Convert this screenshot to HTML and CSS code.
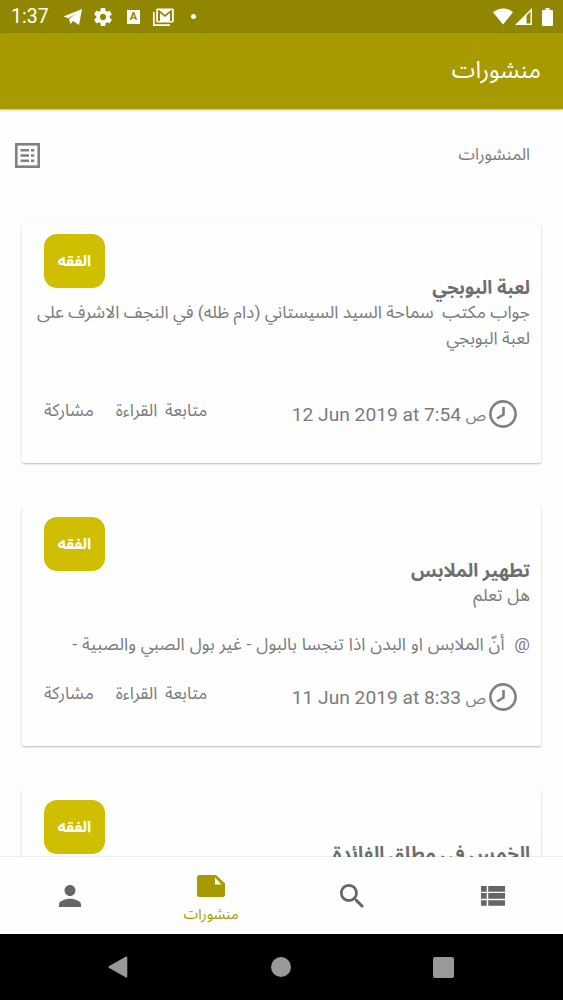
FILE: index.html
```html
<!DOCTYPE html>
<html lang="ar" dir="rtl">
  <head>
    <meta charset="utf-8">
    <title>منشورات</title>
    <link rel="stylesheet" href="styles.css">
  </head>
  <body>
    <div class="screen">
      <div class="status-bar" dir="ltr">
        <span class="time">1:37</span>
        <svg class="st-telegram" viewBox="0 0 20 18" width="20" height="18"><path d="M0.5 8.5 L19 1 L16 17 L10 13 L7.5 16 L6 10.800 L13.500 5.500 L5 10.3z"/></svg>
        <svg class="st-gear" viewBox="2 2 20 20" width="18" height="18"><path d="M19.43 12.98c.04-.32.07-.64.07-.98s-.03-.66-.07-.98l2.11-1.65c.19-.15.24-.42.12-.64l-2-3.46c-.12-.22-.39-.3-.61-.22l-2.49 1c-.52-.4-1.08-.73-1.69-.98l-.38-2.65C14.46 2.18 14.25 2 14 2h-4c-.25 0-.46.18-.49.42l-.38 2.65c-.61.25-1.17.59-1.69.98l-2.49-1c-.23-.09-.49 0-.61.22l-2 3.46c-.13.22-.07.49.12.64l2.11 1.65c-.04.32-.07.65-.07.98s.03.66.07.98l-2.11 1.65c-.19.15-.24.42-.12.64l2 3.46c.12.22.39.3.61.22l2.49-1c.52.4 1.08.73 1.69.98l.38 2.65c.03.24.24.42.49.42h4c.25 0 .46-.18.49-.42l.38-2.65c.61-.25 1.17-.59 1.69-.98l2.49 1c.23.09.49 0 .61-.22l2-3.46c.12-.22.07-.49-.12-.64l-2.11-1.65zM12 15.5c-1.93 0-3.5-1.57-3.5-3.5s1.57-3.5 3.5-3.5 3.5 1.57 3.5 3.5-1.57 3.5-3.5 3.5z"/></svg>
        <span class="st-letter">A</span>
        <svg class="st-mail" viewBox="0 0 21 18" width="21" height="18"><path d="M0 4h1.7v12.3H17V18H0z"/><path fill-rule="evenodd" d="M4.500 .5h15a1.300 1.300 0 0 1 1.300 1.300v11.400a1.300 1.300 0 0 1-1.300 1.300h-15a1.300 1.300 0 0 1-1.300-1.300v-11.400a1.300 1.300 0 0 1 1.300-1.300z M5 2v11h2V5l5 4 5-4v8h2V2h-1l-6 4.800L6 2z"/></svg>
        <span class="st-dot"></span>
        <svg class="st-wifi" viewBox="0 0 20 17" width="20" height="17"><path d="M0 4.200C6 -.9 14 -.9 20 4.200L10 16.500z"/></svg>
        <svg class="st-signal" viewBox="0 0 17 17" width="17" height="17"><path fill-rule="evenodd" d="M0 17L17 0v17z M11.500 7.500V15.500H15.500V3.500z"/></svg>
        <svg class="st-battery" viewBox="0 0 11 18" width="11" height="18"><path d="M3.500 0h4v2H10a1 1 0 0 1 1 1v14a1 1 0 0 1-1 1H1a1 1 0 0 1-1-1V3a1 1 0 0 1 1-1h2.500z"/></svg>
      </div>

      <header class="toolbar"><h1>منشورات</h1></header>

      <main class="content">
        <div class="section-head">
          <span class="section-title">المنشورات</span>
          <svg viewBox="0 0 25 25" width="25" height="25"><rect x="1.300" y="1.300" width="22.400" height="22.400" fill="none" stroke="#808080" stroke-width="2.600"/><path fill="#808080" d="M5.500 6h8.500v2.600H5.500z M16 6h3.200v2.600H16z M5.500 11.200h8.500v2.600H5.500z M16 11.200h3.200v2.600H16z M5.500 16.400h8.500V19H5.500z M16 16.400h3.200V19H16z"/></svg>
        </div>

        <article class="card">
          <span class="badge">الفقه</span>
          <h2>لعبة البوبجي</h2>
          <p class="excerpt first">جواب مكتب&nbsp; سماحة السيد السيستاني (دام ظله) في النجف الاشرف على<br>لعبة البوبجي</p>
          <div class="card-footer">
            <svg class="clock" viewBox="0 0 28 28" width="28" height="28"><circle cx="14" cy="14" r="12.600"/><path d="M14.500 7v7.500L8 18.500"/></svg>
            <span class="date" dir="ltr">12 Jun 2019 at 7:54 <span class="period">ص</span></span>
            <a class="more">متابعة القراءة</a>
            <a class="share">مشاركة</a>
          </div>
        </article>

        <article class="card">
          <span class="badge">الفقه</span>
          <h2>تطهير الملابس</h2>
          <p class="excerpt">هل تعلم<br><br>@&nbsp; أنّ الملابس او البدن اذا تنجسا بالبول - غير بول الصبي والصبية -</p>
          <div class="card-footer">
            <svg class="clock" viewBox="0 0 28 28" width="28" height="28"><circle cx="14" cy="14" r="12.600"/><path d="M14.500 7v7.500L8 18.500"/></svg>
            <span class="date" dir="ltr">11 Jun 2019 at 8:33 <span class="period">ص</span></span>
            <a class="more">متابعة القراءة</a>
            <a class="share">مشاركة</a>
          </div>
        </article>

        <article class="card">
          <span class="badge">الفقه</span>
          <h2>الخمس في مطلق الفائدة</h2>
        </article>
      </main>

      <nav class="tabs">
        <a class="tab"><svg viewBox="0 0 24 20" width="24" height="20"><path d="M0 0h5.700v5.700H0z M7.200 0H24v5.700H7.200z M0 7.100h5.700v5.700H0z M7.200 7.100H24v5.700H7.200z M0 14.200h5.700v5.600H0z M7.200 14.200H24v5.600H7.200z"/></svg></a>
        <a class="tab"><svg viewBox="3 3 17.500 17.500" width="24" height="24"><path d="M15.500 14h-.79l-.28-.27C15.410 12.590 16 11.110 16 9.500 16 5.910 13.090 3 9.500 3S3 5.910 3 9.500 5.910 16 9.500 16c1.610 0 3.090-.59 4.230-1.570l.27.28v.79l5 4.990L20.490 19l-4.990-5zm-6 0C7.010 14 5 11.990 5 9.500S7.010 5 9.500 5 14 7.010 14 9.500 11.990 14 9.500 14z"/></svg></a>
        <a class="tab active">
          <svg viewBox="0 0 28 22" width="28" height="22"><path fill-rule="evenodd" d="M2.500 0H19l9 8.500v11a2.500 2.500 0 0 1-2.500 2.500h-23A2.500 2.500 0 0 1 0 19.500v-17A2.500 2.500 0 0 1 2.500 0z M18 2.500v7h6.500z"/></svg>
          <span>منشورات</span>
        </a>
        <a class="tab"><svg viewBox="4 4 16 16" width="22" height="22"><path d="M12 12c2.210 0 4-1.790 4-4s-1.790-4-4-4-4 1.790-4 4 1.790 4 4 4zm0 2c-2.670 0-8 1.340-8 4v2h16v-2c0-2.660-5.330-4-8-4z"/></svg></a>
      </nav>

      <div class="system-bar" dir="ltr">
        <svg class="sys-back" viewBox="0 0 20 22" width="20" height="22"><path d="M18 .5a1 1 0 0 1 1.300 1v19a1 1 0 0 1-1.300 1L.8 11.800a1 1 0 0 1 0-1.600z"/></svg>
        <span class="sys-home"></span>
        <span class="sys-recent"></span>
      </div>
    </div>
  </body>
</html>
```

FILE: styles.css
```css
* {
  box-sizing: border-box;
}

body {
  margin: 0;
  font-family: Roboto, "Noto Sans Arabic", "Noto Sans", "DejaVu Sans", sans-serif;
  color: #7b7b7b;
}

svg {
  display: block;
  flex: none;
}

.screen {
  width: 563px;
  height: 1000px;
  display: flex;
  flex-direction: column;
  overflow: hidden;
  background: #fdfdfd;
}

.status-bar {
  height: 33px;
  flex: none;
  display: flex;
  align-items: center;
  padding: 0 10px 0 11px;
  background: #918600;
  color: #fff;
}

.status-bar svg {
  fill: #fff;
}

.time {
  width: 52px;
  font-size: 19.5px;
}

.st-gear {
  margin-left: 11px;
}

.st-letter {
  width: 13px;
  height: 14px;
  margin-left: 15px;
  background: #fff;
  color: #918600;
  font-size: 11px;
  font-weight: bold;
  line-height: 14px;
  text-align: center;
}

.st-mail {
  margin-left: 13px;
}

.st-dot {
  width: 5px;
  height: 5px;
  margin-left: 17px;
  border-radius: 50%;
  background: #fff;
}

.st-wifi {
  margin-left: auto;
}

.st-signal {
  margin-left: 2px;
}

.st-battery {
  margin-left: 10px;
}

.toolbar {
  height: 76px;
  flex: none;
  display: flex;
  align-items: center;
  padding: 0 22px 2px;
  background: #a79a00;
  color: #fff;
  box-shadow: 0 1px 2px rgba(0, 0, 0, 0.3);
}

h1 {
  margin: 0;
  font-size: 23.7px;
  font-weight: normal;
}

.content {
  height: 748px;
  flex: none;
  padding: 0 22px;
  overflow: hidden;
}

.section-head {
  height: 115px;
  display: flex;
  justify-content: space-between;
  padding: 34px 11px 0 0;
  margin-left: -7px;
}

.section-title {
  line-height: 24px;
  font-size: 16.6px;
}

.card {
  height: 239px;
  margin-bottom: 44px;
  display: flex;
  flex-direction: column;
  padding: 10px 11px 0 15px;
  background: #fefefe;
  border-radius: 2px;
  box-shadow: 0 1px 2px rgba(0, 0, 0, 0.26);
}

.badge {
  width: 61px;
  height: 54px;
  flex: none;
  align-self: flex-end;
  margin-left: 7px;
  border-radius: 13px;
  background: #cfbf00;
  color: #fff;
  font-size: 15.3px;
  font-weight: bold;
  line-height: 54px;
  text-align: center;
}

h2 {
  height: 24px;
  margin: -12px 0 0;
  font-size: 18.5px;
  line-height: 24px;
  color: #6e6e6e;
}

.excerpt {
  height: 76px;
  margin: 0;
  font-size: 17.4px;
  line-height: 24.5px;
  word-spacing: 0.6px;
  white-space: nowrap;
}

.excerpt.first {
  line-height: 26px;
  word-spacing: 0;
  margin-top: -1px;
  margin-bottom: 1px;
}

.card-footer {
  display: flex;
  align-items: center;
  height: 28px;
  margin-top: 24px;
  padding: 0 13px 0 7px;
}

.clock {
  fill: none;
  stroke: #808080;
  stroke-width: 2.6;
}

.date {
  margin: 3px 3px 0 0;
  font-size: 19.2px;
  white-space: nowrap;
}

.period {
  font-size: 15.5px;
}

.more,
.share {
  font-size: 17.2px;
  line-height: 24px;
  margin-top: -8px;
  white-space: nowrap;
}

.more {
  margin-right: auto;
  word-spacing: 3.5px;
}

.share {
  margin-right: 22px;
}

.tabs {
  height: 77px;
  flex: none;
  display: grid;
  grid-template-columns: repeat(4, 1fr);
  background: #fefefe;
  box-shadow: 0 -1px 1px rgba(0, 0, 0, 0.06);
  position: relative;
}

.tab {
  display: flex;
  flex-direction: column;
  align-items: center;
  justify-content: center;
  fill: #666;
}

.tab.active {
  padding-top: 8px;
  fill: #a79a00;
  color: #a79a00;
}

.tab span {
  margin-top: 6px;
  font-size: 14.6px;
  line-height: 22px;
}

.system-bar {
  height: 66px;
  flex: none;
  display: flex;
  align-items: center;
  padding-left: 108px;
  background: #000;
}

.sys-back {
  fill: #9a989a;
}

.sys-home {
  width: 20px;
  height: 20px;
  margin-left: 143px;
  border-radius: 50%;
  background: #9a989a;
}

.sys-recent {
  width: 21px;
  height: 21px;
  margin-left: 142px;
  border-radius: 2px;
  background: #9a989a;
}
```
